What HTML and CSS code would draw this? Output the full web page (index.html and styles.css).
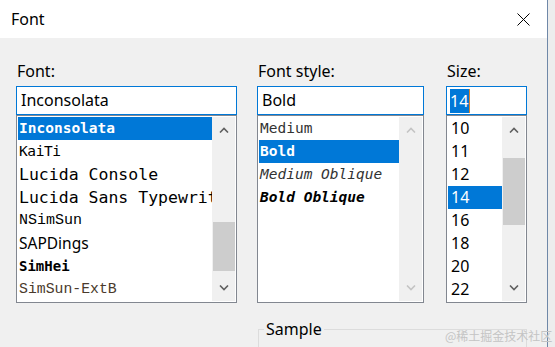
FILE: index.html
```html
<!DOCTYPE html>
<html lang="en">
<head>
    <meta charset="UTF-8">
    <title>Font</title>
    <link rel="stylesheet" href="styles.css">
</head>
<body>
    <div class="window">
        <div class="titlebar">
            <span class="title">Font</span>
            <svg class="close" width="13" height="13" viewBox="0 0 13 13">
                <path d="M0.5 0.5 L12.5 12.5 M12.5 0.5 L0.5 12.5" stroke="#000" stroke-width="1" fill="none"/>
            </svg>
        </div>

        <div class="content">
            <div class="columns">
                <div class="column col-font">
                    <div class="label">Font:</div>
                    <div class="input">Inconsolata</div>
                    <div class="listbox">
                        <ul class="items">
                            <li class="item selected f-incon">Inconsolata</li>
                            <li class="item f-kaiti">KaiTi</li>
                            <li class="item f-lucida">Lucida Console</li>
                            <li class="item f-lucida">Lucida Sans Typewriter</li>
                            <li class="item f-nsimsun">NSimSun</li>
                            <li class="item f-sap">SAPDings</li>
                            <li class="item f-simhei">SimHei</li>
                            <li class="item f-extb">SimSun-ExtB</li>
                        </ul>
                        <div class="scrollbar">
                            <div class="arrow"><svg width="10" height="6" viewBox="0 0 10 6"><path d="M1 5.5 L5 1.5 L9 5.5" /></svg></div>
                            <div class="track"><div class="thumb" style="margin-top: 79px; height: 49px;"></div></div>
                            <div class="arrow"><svg width="10" height="6" viewBox="0 0 10 6"><path d="M1 0.5 L5 4.5 L9 0.5" /></svg></div>
                        </div>
                    </div>
                </div>

                <div class="column col-style">
                    <div class="label">Font style:</div>
                    <div class="input">Bold</div>
                    <div class="listbox">
                        <ul class="items">
                            <li class="item f-mono f-medium">Medium</li>
                            <li class="item selected f-mono f-bold">Bold</li>
                            <li class="item f-mono f-medium f-italic">Medium Oblique</li>
                            <li class="item f-mono f-bold f-italic">Bold Oblique</li>
                        </ul>
                        <div class="scrollbar disabled">
                            <div class="arrow"><svg width="10" height="6" viewBox="0 0 10 6"><path d="M1 5.5 L5 1.5 L9 5.5" /></svg></div>
                            <div class="track"></div>
                            <div class="arrow"><svg width="10" height="6" viewBox="0 0 10 6"><path d="M1 0.5 L5 4.5 L9 0.5" /></svg></div>
                        </div>
                    </div>
                </div>

                <div class="column col-size">
                    <div class="label">Size:</div>
                    <div class="input input-size"><span class="sel">14</span><span class="caret"></span></div>
                    <div class="listbox">
                        <ul class="items">
                            <li class="item f-num">10</li>
                            <li class="item f-num">11</li>
                            <li class="item f-num">12</li>
                            <li class="item selected f-num">14</li>
                            <li class="item f-num">16</li>
                            <li class="item f-num">18</li>
                            <li class="item f-num">20</li>
                            <li class="item f-num">22</li>
                        </ul>
                        <div class="scrollbar">
                            <div class="arrow"><svg width="10" height="6" viewBox="0 0 10 6"><path d="M1 5.5 L5 1.5 L9 5.5" /></svg></div>
                            <div class="track"><div class="thumb" style="margin-top: 15px; height: 67px;"></div></div>
                            <div class="arrow"><svg width="10" height="6" viewBox="0 0 10 6"><path d="M1 0.5 L5 4.5 L9 0.5" /></svg></div>
                        </div>
                    </div>
                </div>
            </div>

            <fieldset class="sample">
                <legend>Sample</legend>
            </fieldset>
        </div>
    </div>

    <div class="watermark">@稀土掘金技术社区</div>
</body>
</html>
```

FILE: styles.css
```css
body, html {
    margin: 0;
    padding: 0;
    height: 100%;
    overflow: hidden;
    background-color: #ededed;
    font-family: "Noto Sans", Arial, sans-serif;
    color: #000;
}

body {
    position: relative;
}

.window {
    width: 547px;
    height: 347px;
    background-color: #f0f0f0;
    border-right: 1px solid #6f88a8;
    overflow: hidden;
}

.titlebar {
    height: 38px;
    background-color: #fff;
    display: flex;
    align-items: center;
    justify-content: space-between;
    padding: 0 17px 0 11px;
}

.title {
    font-size: 16px;
    line-height: 38px;
}

.close {
    display: block;
    margin-top: 1px;
}

.content {
    padding: 23px 0 0 16px;
}

.columns {
    display: flex;
    align-items: flex-start;
}

.col-font {
    width: 221px;
}

.col-style {
    width: 167px;
    margin-left: 20px;
}

.col-size {
    width: 81px;
    margin-left: 22px;
}

.label {
    font-size: 16px;
    line-height: 20px;
    padding-left: 1px;
    margin-bottom: 5px;
}

.input {
    box-sizing: border-box;
    height: 29px;
    border: 1px solid #0078d7;
    background-color: #fff;
    font-size: 16px;
    line-height: 26px;
    padding-left: 4px;
    white-space: nowrap;
    overflow: hidden;
}

.input-size {
    padding-left: 3px;
    display: flex;
    align-items: center;
}

.input-size .sel {
    background-color: #0078d7;
    color: #fff;
    height: 24px;
    line-height: 24px;
    padding-right: 1px;
}

.input-size .caret {
    width: 1px;
    height: 24px;
    background-color: #d9822b;
}

.listbox {
    display: flex;
    border: 1px solid #828790;
    padding: 1px;
    background-color: #fff;
}

.items {
    list-style: none;
    margin: 0;
    padding: 0;
    flex: 1;
    min-width: 0;
    height: 184px;
    overflow: hidden;
}

.item {
    height: 23px;
    line-height: 23px;
    padding-left: 1px;
    white-space: nowrap;
    overflow: hidden;
    font-family: "DejaVu Sans Mono", monospace;
    font-size: 14.5px;
}

.item.selected {
    background-color: #0078d7;
    color: #fff;
}

.f-incon {
    font-weight: 600;
}

.f-kaiti {
    font-size: 14.5px;
    letter-spacing: -0.4px;
}

.f-lucida {
    font-size: 16.5px;
}

.f-nsimsun {
    font-family: "Liberation Mono", monospace;
    font-size: 15px;
}

.f-sap {
    font-family: "Noto Sans", sans-serif;
    font-size: 15.5px;
}

.f-simhei {
    font-weight: bold;
    font-size: 14px;
}

.f-extb {
    font-family: "Liberation Mono", monospace;
    font-size: 14.8px;
    color: #4a3a2c;
}

.f-mono {
    font-size: 14.5px;
    padding-left: 1px;
}

.f-medium {
    color: #333;
    font-weight: normal;
}

.f-bold {
    font-weight: bold;
}

.f-italic {
    font-style: italic;
}

.f-num {
    font-family: "Noto Sans", sans-serif;
    font-size: 16px;
    padding-left: 3px;
}

.scrollbar {
    width: 23px;
    height: 184px;
    background-color: #f0f0f0;
    display: flex;
    flex-direction: column;
}

.arrow {
    height: 26px;
    display: flex;
    align-items: center;
    justify-content: center;
}

.arrow svg path {
    fill: none;
    stroke: #606060;
    stroke-width: 1.6;
}

.disabled .arrow svg path {
    stroke: #c4c4c4;
}

.track {
    flex: 1;
}

.thumb {
    background-color: #cdcdcd;
    margin-left: 1px;
}

.sample {
    box-sizing: border-box;
    width: 269px;
    height: 60px;
    margin: 16px 0 0 242px;
    padding: 0 5px;
    border: 1px solid #dcdcdc;
}

.sample legend {
    font-size: 16px;
    line-height: 20px;
    padding: 0 2px;
}

/* marca de agua sobre la esquina */
.watermark {
    position: absolute;
    left: 445px;
    top: 327px;
    font-family: "Noto Sans CJK SC", sans-serif;
    font-size: 12px;
    line-height: 18px;
    color: #c4c4c4;
    white-space: nowrap;
}
```
